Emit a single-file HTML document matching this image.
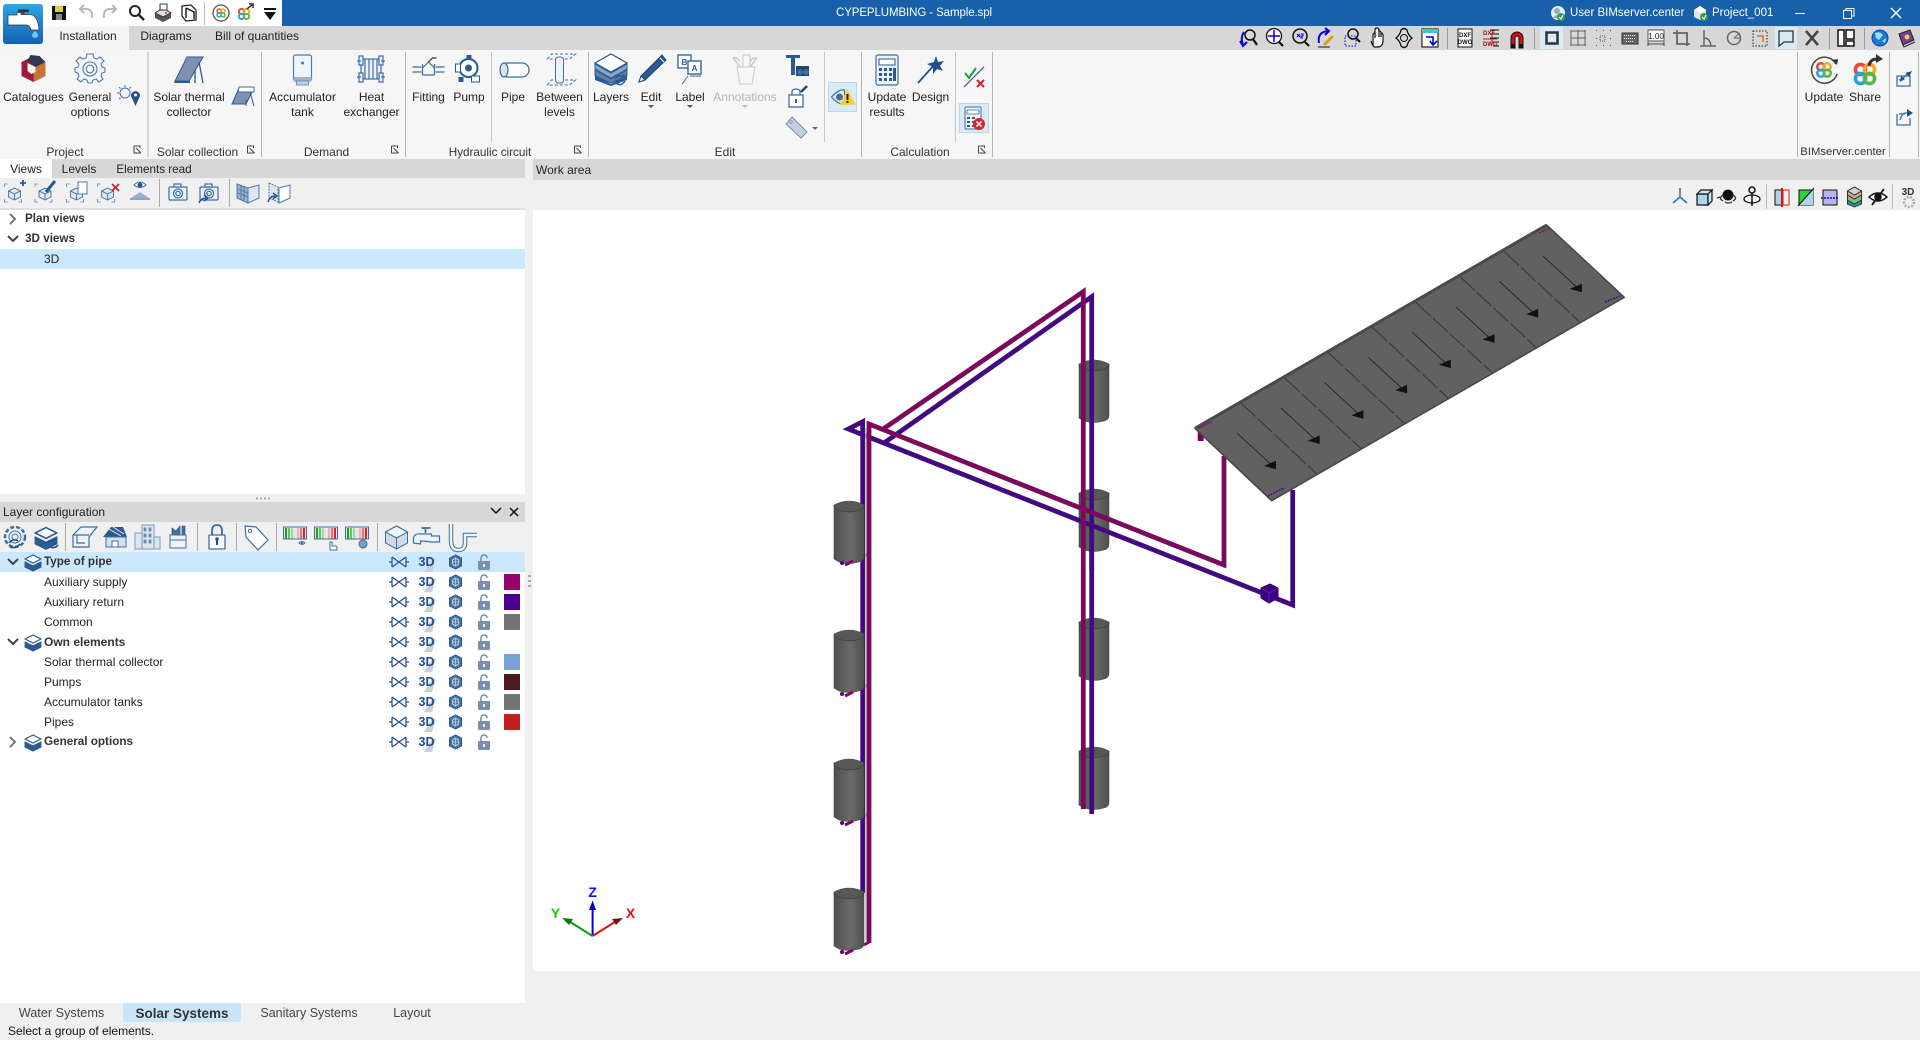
<!DOCTYPE html>
<html><head><meta charset="utf-8"><title>CYPEPLUMBING - Sample.spl</title>
<style>
html,body{margin:0;padding:0;width:1920px;height:1040px;overflow:hidden;background:#f0f0f0}
body{position:relative;font-family:"Liberation Sans",sans-serif;font-size:12px;color:#222}
.b{position:absolute}
.t{position:absolute;white-space:nowrap;line-height:16px}
.c{transform:translateX(-50%);text-align:center;line-height:15px}
.g{color:#333;font-weight:bold}
svg{position:absolute;left:0;top:0}
</style></head><body>
<div class="b" style="left:0;top:0;width:1920px;height:26px;background:#1860a9"></div>
<div class="b" style="left:0;top:0;width:282px;height:26px;background:#fff"></div>
<div class="b" style="left:0;top:26px;width:1920px;height:24px;background:#d7d7d7"></div>
<div class="b" style="left:0;top:26px;width:47px;height:24px;background:#f5f5f5"></div>
<div class="b" style="left:47px;top:26px;width:82px;height:24px;background:#f5f5f5"></div>
<div class="b" style="left:0;top:50px;width:1920px;height:109px;background:#f6f6f6"></div>
<div class="b" style="left:0;top:159px;width:525px;height:19px;background:#d7d7d7"></div>
<div class="b" style="left:0;top:159px;width:52px;height:19px;background:#fff"></div>
<div class="b" style="left:533px;top:159px;width:1387px;height:21px;background:#d7d7d7"></div>
<div class="b" style="left:0;top:208px;width:525px;height:286px;background:#fff;border-top:2px solid #e0e0e0;box-sizing:border-box"></div>
<div class="b" style="left:0;top:249px;width:525px;height:20px;background:#cce8ff"></div>
<div class="b" style="left:0;top:502px;width:525px;height:20px;background:#d7d7d7"></div>
<div class="b" style="left:0;top:552px;width:525px;height:451px;background:#fff"></div>
<div class="b" style="left:0;top:552px;width:525px;height:20px;background:#cce8ff"></div>
<div class="b" style="left:533px;top:210px;width:1387px;height:761px;background:#fff"></div>
<div class="b" style="left:123px;top:1003px;width:118px;height:19px;background:#c9e6f8"></div>
<div class="b" style="left:1775px;top:27px;width:22px;height:22px;background:#d9ebf7"></div>
<div class="b" style="left:1540px;top:27px;width:23px;height:22px;background:#d9ebf7;border:0"></div>
<div class="b" style="left:828px;top:82px;width:29px;height:30px;background:#d9ebf7;border:1px solid #bcd6e8;box-sizing:border-box"></div>
<div class="b" style="left:959px;top:103px;width:30px;height:30px;background:#d9ebf7;border:1px solid #bcd6e8;box-sizing:border-box"></div>

<svg width="1920" height="1040" viewBox="0 0 1920 1040" xmlns="http://www.w3.org/2000/svg">
<defs>
<linearGradient id="lg" x1="0" y1="0" x2="0" y2="1"><stop offset="0" stop-color="#2ea6e6"/><stop offset="1" stop-color="#1462b2"/></linearGradient>
<linearGradient id="tg" x1="0" y1="0" x2="1" y2="0"><stop offset="0" stop-color="#4f4f4f"/><stop offset=".55" stop-color="#6a6a6a"/><stop offset="1" stop-color="#4f4f4f"/></linearGradient>
<symbol id="tank" viewBox="0 0 32 66" overflow="visible">
<path d="M1 6Q16 -2 31 6V57Q31 62 26 63Q16 66 6 63L1 60Z" fill="url(#tg)" stroke="#4a4a4a" stroke-width=".6"/>
<path d="M1 6Q16 -2 31 6Q31 12 16 13Q1 12 1 6Z" fill="#575757"/>
<path d="M1 6Q1 12 16 13Q31 12 31 6" fill="none" stroke="#3c3c3c" stroke-width=".7"/>
</symbol>
<g id="stub"><path d="M845 6L853 2" fill="none" stroke="#8a0062" stroke-width="3"/><path d="M864 -3L869 -6" fill="none" stroke="#8a0062" stroke-width="3"/><circle cx="842" cy="4" r="2" fill="#4b0092"/></g>
<g id="lay" fill="#2c5a90" stroke="#2c5a90" stroke-linejoin="round"><path d="M-8 3L0 7L8 3V5L0 9L-8 5Z"/><path d="M-8 0L0 4L8 0V2L0 6L-8 2Z" /><path d="M-8 -3L0 -7L8 -3L0 1Z" fill="#fff" stroke-width="1.2"/></g>
<g id="rowi">
<g fill="none" stroke="#1f4f8a" stroke-width="1.2"><path d="M392 -5V5M406 -5V5M392 -5L406 5M406 -5L392 5M389 0h3M406 0h3"/></g>
<path d="M432 -3h4l-4 13h-8z" fill="#c9cfd6"/>
<g transform="translate(455.5,0)"><path d="M0 -7L6 -4V4L0 7L-6 4V-4Z" fill="#44719f" stroke="#2c5a90"/><path d="M-3 -2L0 -4L3 -2V2L0 4L-3 2Z" fill="none" stroke="#cfdbe8" stroke-width=".9"/><path d="M0 -4V4M-3 0H3" stroke="#cfdbe8" stroke-width=".7"/></g>
<g transform="translate(484,1)"><path d="M-3 -2V-4Q-3 -8 0 -8Q3 -8 3 -5" fill="none" stroke="#7b90ab" stroke-width="1.6"/><rect x="-6" y="-2" width="12" height="9" rx="1" fill="#7b90ab"/><rect x="-1" y="1" width="2" height="3" fill="#e8edf3"/></g>
</g>
<g id="cam" fill="none" stroke="#3c6ea5" stroke-width="1.2"><rect x="-9" y="-6" width="18" height="13" rx="1" fill="#eef3f8"/><rect x="-4" y="-9" width="7" height="3" fill="#eef3f8"/><circle cy="0.5" r="4.5"/><circle cy=".5" r="2.2"/></g>
<g id="vc" fill="none" stroke="#4f79a8" stroke-width="1"><path d="M-6 -2L0 -5L6 -2V4L0 7L-6 4Z" fill="#e1e8f0"/><path d="M-6 -2L0 1L6 -2M0 1V7"/><path d="M-10 -6V-9H-7M-10 6V9H-7M4 9H7V6" stroke="#7d9cc0"/></g>
<g id="gg"><rect x="-11" y="-6" width="22" height="9" fill="#dfe6ec"/><g fill="#20a020"><rect x="-10" y="-7" width="2" height="11"/><rect x="-7" y="-7" width="2" height="11" fill="#5fc65f"/><rect x="-4" y="-7" width="2" height="11" fill="#a0dca0"/></g><g fill="#e02020"><rect x="8" y="-7" width="2" height="11"/><rect x="5" y="-7" width="2" height="11" fill="#f07070"/><rect x="2" y="-7" width="2" height="11" fill="#f5b0b0"/></g><rect x="-11.500" y="-8" width="23" height="12" fill="none" stroke="#3c6ea5"/></g>
<g id="bimr" fill="none" stroke-width="2.4"><circle cx="-3" cy="-3" r="3.4" stroke="#e8453c"/><circle cx="3" cy="-3" r="3.4" stroke="#f5a623"/><circle cx="-3" cy="3" r="3.4" stroke="#25a0e0"/><circle cx="3" cy="3" r="3.4" stroke="#55b848"/></g>
<path id="pv" d="M862.700 893V421.700L848.300 429L1292.700 605V490" fill="none"/>
<path id="pv2" d="M884 443L1091.700 296.700V814" fill="none"/>
<path id="pm" d="M869 943V424L1224 565V456" fill="none"/>
<path id="pm2" d="M881.700 430L1083.300 291.700V809" fill="none"/>
</defs>

<!-- logo + QAT -->
<rect x="3" y="4" width="40" height="40" rx="3" fill="url(#lg)"/>
<path d="M8 15H17V12.500H21V14.500H31Q38 16 39 30H31Q30 25 26 25H8Z" fill="#fff" stroke="#333" stroke-width=".7"/><rect x="18" y="9.500" width="11" height="2.500" fill="#333"/><rect x="21.500" y="11.500" width="3" height="3" fill="#444"/><path d="M35 30Q40 35 38 37Q35 40 32 37Q30 35 35 30Z" fill="#6fc3f0" stroke="#1e6aa8" stroke-width=".8"/>
<g transform="translate(59,13)"><rect x="-7" y="-7" width="14" height="14" fill="#111"/><rect x="-4" y="-7" width="8" height="6" fill="#d4d433"/><rect x="-3" y="1" width="6" height="6" fill="#888"/></g>
<path d="M92 18Q93 9 86 9H81M84 5L80 9L84 13" fill="none" stroke="#b9b9b9" stroke-width="2"/>
<path d="M104 18Q103 9 110 9H115M112 5L116 9L112 13" fill="none" stroke="#b9b9b9" stroke-width="2"/>
<g fill="none" stroke="#222" stroke-width="2"><circle cx="135" cy="11" r="5"/><path d="M139 15L144 20" stroke-width="2.500"/></g>
<g transform="translate(163,13)"><path d="M-8 0L0 -5L8 0V5L0 9L-8 5Z" fill="#555"/><path d="M-8 0L0 -5L8 0L0 4Z" fill="#ddd" stroke="#333"/><rect x="-3" y="-9" width="7" height="6" fill="#fff" stroke="#333"/><circle cx="3" cy="0" r="1" fill="#d33"/></g>
<g transform="translate(189,13)"><path d="M-7 -7L2 -8L7 -3V7L-3 8L-7 3Z" fill="#fff" stroke="#222" stroke-width="1.300"/><path d="M-3 -5L5 -1V6M-3 -5V5" fill="none" stroke="#222" stroke-width="1.500"/></g>
<rect x="204" y="2" width="1" height="23" fill="#bbb"/>
<g transform="translate(221,13)"><circle r="8" fill="#fff" stroke="#555" stroke-width="1.300"/><use href="#bimr" transform="scale(.62)"/></g>
<g transform="translate(244,14)"><use href="#bimr" transform="scale(.8)"/><path d="M3 -5L8 -9M5 -10H9V-6" fill="none" stroke="#333" stroke-width="1.500"/></g>
<path d="M264 8H276V10H264ZM264 12H276L270 20Z" fill="#111"/>

<!-- title bar right -->
<g transform="translate(1558,13)"><circle r="7" fill="#e6edf5"/><circle cx="-1" cy="-2" r="3" fill="#9ab"/><path d="M-5 5Q-1 -1 3 5Z" fill="#9ab"/><circle cx="3" cy="4" r="4" fill="#3a9a4a"/><path d="M1 4L3 6L5 2" stroke="#fff" fill="none"/></g>
<g transform="translate(1700,13)"><path d="M-6 -3L0 -7L6 -3V4L0 7L-6 4Z" fill="#dfe5ea"/><path d="M-6 -3L0 0L6 -3L0 -7Z" fill="#fff"/><circle cx="4" cy="4" r="4" fill="#3a9a4a"/><path d="M2 4L4 6L6 2" stroke="#fff" fill="none"/></g>
<g stroke="#fff" fill="none" stroke-width="1"><path d="M1795 13.500H1805"/><rect x="1843.500" y="10.500" width="8" height="8"/><path d="M1846 10.500V8.500H1854V16H1852"/><path d="M1891 8L1901 18M1901 8L1891 18" stroke-width="1.300"/></g>

<!-- top right toolbar -->
<g fill="none" stroke="#111" stroke-width="1.500">
<g transform="translate(1248,38)"><circle cx="2" cy="-3" r="5" /><path d="M5 1L9 7" stroke-width="2.200"/><path d="M-4 -6Q-8 0 -5 6M-8 3L-5 8L-1 4" stroke="#0000e0" stroke-width="2"/></g>
<g transform="translate(1274,38)"><circle r="7.500" cy="-2" fill="#fff" stroke-width="1.300"/><path d="M0 -8V4M-6 -2H6" stroke="#0000e0" stroke-width="1.500"/><path d="M5 4L9 8" stroke-width="2.200"/></g>
<g transform="translate(1300,38)"><circle r="7" cy="-2"/><path d="M5 4L9 8" stroke-width="2.200"/><path d="M-3 -1L0 -4M-3 -4L0 -1" stroke="#0000e0" stroke-width="1"/><path d="M1 -4H3V-2H1V0H3" stroke="#0000e0" stroke-width="1"/></g>
<g transform="translate(1326,38)"><path d="M-7 5Q-9 -6 2 -7M-1 -10L3 -7L-1 -3" stroke="#0000e0" stroke-width="2"/><path d="M-2 7L7 -2" stroke="#d8a020" stroke-width="3"/><path d="M-8 9H4" stroke-width="1"/></g>
<g transform="translate(1352,38)"><rect x="-7" y="-2" width="11" height="10" stroke="#0000e0" stroke-width="1" stroke-dasharray="1.500 1.500"/><circle cx="1" cy="-4" r="5"/><path d="M4 0L8 4" stroke-width="2.200"/></g>
<g transform="translate(1378,38)"><path d="M-5 8V-3Q-5 -5 -3 -5V0M-3 -5V-8Q-3 -10 -1 -10Q1 -10 1 -8V-1M1 -7Q3 -7 3 -5V-1M3 -5Q5 -5 5 -3V4Q4 9 0 9H-3Q-5 9 -7 3" fill="#fff" stroke-width="1.200"/></g>
<g transform="translate(1404,38)"><path d="M-8 0Q-4 -3 -3 -8Q0 -11 3 -8Q4 -3 8 0Q4 3 3 8Q0 11 -3 8Q-4 3 -8 0Z" stroke-width="1.300"/><circle r="3.500" stroke-width="1"/></g>
<g transform="translate(1430,38)"><rect x="-8" y="-9" width="16" height="18" fill="#fff" stroke-width="1.100"/><rect x="-8" y="-9" width="16" height="4" fill="#3cc8d8" stroke="none"/><path d="M-4 -1H3V6M0 3L3 7L7 3" stroke="#0000e0" stroke-width="1.600"/></g>
</g>
<rect x="1447" y="28" width="1" height="21" fill="#999"/>
<g transform="translate(1465,38)"><rect x="-7" y="-9" width="14" height="18" fill="#fff" stroke="#111"/><text x="0" y="-1" font-size="6" font-weight="bold" text-anchor="middle" font-family="Liberation Sans" fill="#111">DXF</text><text x="0" y="6" font-size="6" font-weight="bold" text-anchor="middle" font-family="Liberation Sans" fill="#111">DWG</text></g>
<g transform="translate(1491,38)" stroke="#111" fill="none"><path d="M-1 -8H8M-1 -4H8M-1 0H8M2 4H8M2 8H8" /><text x="-8" y="-3" font-size="6" font-weight="bold" font-family="Liberation Sans" fill="#a01010" stroke="none">DXF</text><text x="-8" y="8" font-size="6" font-weight="bold" font-family="Liberation Sans" fill="#a01010" stroke="none">DWG</text><path d="M-8 1H6M1 -3V7" stroke="#d01010"/></g>
<path d="M1511 48V38A6 6 0 0 1 1523 38V48H1519V38A2 2 0 0 0 1515 38V48Z" fill="#d01010" stroke="#111"/><rect x="1511" y="44" width="4" height="4" fill="#111"/><rect x="1519" y="44" width="4" height="4" fill="#111"/>
<rect x="1534" y="28" width="1" height="21" fill="#999"/>
<rect x="1546.500" y="32.500" width="11" height="11" fill="none" stroke="#333" stroke-width="2.500"/>
<g stroke="#666" fill="none"><path d="M1571 30V46M1578 30V46M1585 30V46M1571 31H1586M1571 38H1586M1571 45H1586" /></g>
<g fill="#555"><rect x="1600" y="36" width="5" height="5" fill="none" stroke="#555" stroke-dasharray="1 1"/><path d="M1596 30h1v1h-1zM1603 30h1v1h-1zM1610 30h1v1h-1zM1596 45h1v1h-1zM1603 45h1v1h-1zM1610 45h1v1h-1zM1596 38h1v1h-1zM1610 38h1v1h-1z"/></g>
<g><rect x="1622" y="33" width="16" height="11" fill="#666" stroke="#333"/><path d="M1624 35.500H1636M1624 38.500H1636M1626 41.500H1634" stroke="#eee" stroke-dasharray="1 1"/></g>
<g><rect x="1648" y="30" width="16" height="11" fill="#fff" stroke="#555"/><text x="1656" y="39" font-size="8" text-anchor="middle" font-family="Liberation Sans" fill="#222">1.00</text><path d="M1648 44H1664M1648 42V46M1664 42V46" stroke="#444" fill="none"/></g>
<path d="M1673 33H1687V46M1677 30V44H1690" fill="none" stroke="#666" stroke-width="1.800"/>
<path d="M1700 46H1716M1704 30V46M1704 38Q1710 38 1711 46" fill="none" stroke="#666" stroke-width="1.500"/>
<circle cx="1734" cy="38" r="6.500" fill="none" stroke="#666" stroke-width="1.500"/><path d="M1734 38L1740 33M1734 38H1741" stroke="#666"/>
<rect x="1753" y="31" width="14" height="15" fill="none" stroke="#222" stroke-dasharray="1.500 1.500"/><path d="M1757 36H1763V42" stroke="#d0703a" fill="none" stroke-width="1.500"/>
<path d="M1779 31H1793V42H1784L1779 46Z" fill="none" stroke="#333" stroke-width="1.300"/>
<path d="M1806 31L1818 45M1818 31L1806 45" stroke="#444" stroke-width="2.500"/>
<rect x="1829" y="28" width="1" height="21" fill="#999"/>
<g fill="#fff" stroke="#111" stroke-width="1.500"><rect x="1838" y="30" width="6" height="16"/><rect x="1846" y="30" width="8" height="9"/><rect x="1846" y="41" width="8" height="5"/></g>
<rect x="1864" y="28" width="1" height="21" fill="#999"/>
<circle cx="1880" cy="38" r="8" fill="#1e78d8" stroke="#0b4a9a"/><path d="M1875 33Q1880 31 1883 35L1879 40L1876 38ZM1882 41L1886 38L1885 43Z" fill="#9fdfff"/>
<path d="M1899 34L1910 30L1914 40L1903 45Z" fill="#7a3aa0" stroke="#222"/><path d="M1899 34L1903 45L1904 47L1915 42" fill="none" stroke="#222"/>
<circle cx="1907" cy="37" r="2.500" fill="#e8d830"/>

<!-- ribbon separators -->
<g fill="#b4b4b4"><rect x="147.500" y="52" width="1" height="105"/><rect x="261" y="52" width="1" height="105"/><rect x="405" y="52" width="1" height="105"/><rect x="491" y="52" width="1" height="90" fill="#c8c8c8"/><rect x="588" y="52" width="1" height="105"/><rect x="824" y="52" width="1" height="90" fill="#c8c8c8"/><rect x="861" y="52" width="1" height="105"/><rect x="955" y="52" width="1" height="90" fill="#c8c8c8"/><rect x="992" y="52" width="1" height="105"/><rect x="1797" y="52" width="1" height="105"/><rect x="1889" y="52" width="1" height="105"/><rect x="1918" y="52" width="1" height="105"/></g>
<g id="launch" fill="none" stroke="#444"><path d="M134 146V153H141M134 146H140V148M136 148L141 153" /></g>
<use href="#launch" x="113.500"/><use href="#launch" x="257.500"/><use href="#launch" x="440.500"/><use href="#launch" x="844.500"/>

<!-- ribbon icons -->
<g transform="translate(33.500,69)"><path d="M0 -13L12 -7L12 7L0 13L-12 7L-12 -7Z" fill="#9c1a3a"/><path d="M-3 -14L6 -13L12 -7L2 -2L-6 -8Z" fill="#2d3a52"/><path d="M2 -2L12 -7V7L0 13V3Z" fill="#c8733c"/><path d="M-6 -6L2 -2V3L-2 5L-6 2Z" fill="#f4f4f4"/></g>
<g transform="translate(90,69)" fill="none" stroke="#4f79a8" stroke-width="1.100"><path d="M-3 -14H3L4 -10L7 -9L10 -11L14 -7L11 -4L12 -1L15 0V4L12 5L11 8L13 11L9 14L6 11L3 12L2 15H-2L-3 12L-6 11L-9 14L-13 11L-11 8L-12 5L-15 4V0L-12 -1L-11 -4L-14 -7L-10 -11L-7 -9L-4 -10Z" fill="#f4f6f9" transform="translate(0,-1)"/><circle r="7"/><circle r="3.800"/></g>
<g transform="translate(128,97)"><circle cx="-3" cy="-4" r="5" fill="none" stroke="#3f6ea3"/><path d="M-3 -12V-10M-11 -4H-9M-9 -10L-7.500 -8.500M3 -10L1.500 -8.500M-9 2L-7.500 .5" stroke="#3f6ea3"/><path d="M5 -5A4.500 4.500 0 0 1 12 -1L7.500 9L3 -1A4.500 4.500 0 0 1 5 -5Z" fill="#274f85"/><circle cx="7.500" cy="-2" r="1.500" fill="#fff"/></g>
<path d="M187 57H203L189 81H175Z" fill="#7f90b0" stroke="#2b5a90"/><path d="M174 83H190V81H175Z" fill="#2b5a90"/><path d="M199 62L203 83M195 70V83" stroke="#2b5a90" fill="none" stroke-width="1.300"/>
<path d="M239 88H254L246 104H232Z" fill="#7f90b0" stroke="#2b5a90"/><path d="M239 87H254V92H238Z" fill="#fff" stroke="#3f6ea3"/><path d="M250 92L254 106M246 100V106" stroke="#2b5a90" fill="none"/>
<g transform="translate(302.500,70)"><rect x="-9" y="-15" width="18" height="26" rx="2" fill="#f0f4f8" stroke="#4f79a8" stroke-width="1.200"/><rect x="-9" y="7" width="18" height="4" fill="#9bb4d0"/><rect x="-6" y="11" width="12" height="4" fill="#c2d0e0" stroke="#4f79a8" stroke-width=".7"/><circle cy="-7" r="1.500" fill="#4f79a8"/></g>
<g transform="translate(371,69)" fill="#eef3f8" stroke="#3f6ea3" stroke-width="1.200"><rect x="-10" y="-10" width="20" height="20"/><path d="M-14 -8H-10M-14 8H-10M10 -8H14M10 8H14M-6 -10V10M-2 -10V10M2 -10V10M6 -10V10M-12 -13V-4H-8V-13ZM-12 4V13H-8V4ZM8 -13V-4H12V-13ZM8 4V13H12V4Z"/></g>
<g transform="translate(428.500,69)" fill="none" stroke="#3f6ea3" stroke-width="1.200"><path d="M-16 -2H-7M7 -2H16M-16 3H-7M7 3H16M-6 -5V6M6 -5V6M-6 -1L0 -7L6 -1M-6 6H6"/><path d="M0 -7L4 -11H8" stroke="#333"/></g>
<g transform="translate(468.500,69)"><rect x="-2" y="-14" width="5" height="5" fill="#2b5a90"/><circle cy="-1" r="9" fill="#fff" stroke="#2b5a90" stroke-width="2"/><circle cy="-1" r="3.500" fill="#2b5a90"/><rect x="-13" y="-5" width="5" height="8" fill="#fff" stroke="#2b5a90"/><rect x="-10" y="8" width="5" height="5" fill="#2b5a90"/><rect x="3" y="7" width="8" height="6" fill="#fff" stroke="#2b5a90"/></g>
<g transform="translate(514,70)" fill="#fff" stroke="#3f6ea3" stroke-width="1.300"><rect x="-13" y="-7" width="28" height="14" rx="7"/><ellipse cx="-10" rx="4" ry="7" fill="#dbe5f0"/></g>
<g transform="translate(559.500,70)" fill="none" stroke="#3f6ea3"><path d="M-12 -11L-8 -16H16L10 -11ZM-12 15L-8 10H16L10 15Z" stroke-dasharray="3 2"/><rect x="-4" y="-13" width="8" height="26" rx="3" fill="#eef3f8"/></g>
<g transform="translate(611,70)"><path d="M-16 5L0 14L16 5V10L0 16L-16 10Z" fill="#2c5a90"/><path d="M-16 0L0 9L16 0V6L0 13L-16 6Z" fill="#5f7fa8" stroke="#2c5a90"/><path d="M-16 -6L0 3L16 -6V-1L0 8L-16 -1Z" fill="#8ca4c2" stroke="#2c5a90"/><path d="M-16 -7L0 -16L16 -7L0 2Z" fill="#fff" stroke="#2c5a90" stroke-width="1.200"/><path d="M4 9Q9 3 13 8M13 4V9H8M5 13Q10 17 14 11" fill="none" stroke="#2c5a90" stroke-width="1.500"/></g>
<g transform="translate(652,69)"><path d="M10 -14L14 -9L-7 11L-13 13L-11 7Z" fill="#2b5a90" stroke="#1f4570"/><path d="M8 -11L12 -7" stroke="#fff"/><path d="M-13 13L-11 7L-7 11Z" fill="#fff" stroke="#1f4570"/></g>
<g transform="translate(690,70)"><rect x="-12" y="-15" width="13" height="13" fill="#fff" stroke="#2b5a90" stroke-width="1.300"/><rect x="-2" y="-9" width="13" height="13" fill="#fff" stroke="#2b5a90" stroke-width="1.300"/><text x="-5.500" y="-5" font-size="8" font-weight="bold" text-anchor="middle" font-family="Liberation Sans" fill="#2b5a90">B</text><text x="4.500" y="1" font-size="8" font-weight="bold" text-anchor="middle" font-family="Liberation Sans" fill="#2b5a90">A</text><path d="M-2 6L-8 14M0 6H11" stroke="#3f6ea3" fill="none"/></g>
<g transform="translate(745,70)" fill="#f8f8f8" stroke="#c9c9c9"><path d="M-8 -3H10L7 14H-5Z"/><rect x="-2" y="-15" width="7" height="12"/><path d="M-12 -12L-5 -3M12 -12L5 -3M-12 -12Q-7 -13 -5 -8M12 -12Q7 -13 5 -8" fill="none" stroke-width="1.500"/></g>
<g transform="translate(797,66)"><path d="M-11 -11H3V-8H-2V9H-6V-8H-11Z" fill="#2b5a90"/><path d="M-1 0H12V10H-1Z" fill="#1f4570"/><circle cx="3" cy="6" r="3" fill="#3f6ea3"/><circle cx="9" cy="6" r="3" fill="#3f6ea3"/></g>
<g transform="translate(798,97)"><rect x="-9" y="-2" width="14" height="12" fill="#fff" stroke="#3f6ea3" stroke-width="1.300"/><path d="M-6 -2V-5Q-6 -8 -2 -8Q2 -8 2 -5V-2" fill="none" stroke="#3f6ea3" stroke-width="1.300"/><rect x="-3" y="2" width="2" height="4" fill="#2b5a90"/><path d="M3 -5L9 -11" stroke="#1f4570" stroke-width="2.500"/></g>
<path d="M786 124L792 117L807 132L801 138Z" fill="#c5cede" stroke="#7d92ad"/><circle cx="791" cy="122" r="1.200" fill="#fff" stroke="#7d92ad"/><path d="M812 127H818L815 130Z" fill="#666"/>
<path d="M648 105H654L651 108ZM687 105H693L690 108Z" fill="#555"/><path d="M742 105H748L745 108Z" fill="#bbb"/>
<g transform="translate(842.500,97)"><path d="M-11 0Q-4 -8 2 -7L2 7Q-4 8 -11 0Z" fill="none" stroke="#3f6ea3" stroke-width="1.200"/><circle cx="-3" r="3.500" fill="#3f6ea3"/><path d="M5 -8L13 8H-3Z" fill="#f4d03f"/><rect x="4" y="-3" width="2" height="6" fill="#222"/><rect x="4" y="4" width="2" height="2" fill="#222"/></g>
<g transform="translate(887,70)"><rect x="-11" y="-15" width="22" height="30" rx="2" fill="#eef3f8" stroke="#3f6ea3" stroke-width="1.200"/><rect x="-8" y="-11" width="16" height="6" fill="#fff" stroke="#2b5a90"/><path d="M-8 -2h3v3h-3zM-3 -2h3v3h-3zM2 -2h3v3h-3zM-8 3h3v3h-3zM-3 3h3v3h-3zM2 3h3v3h-3zM-8 8h3v3h-3zM-3 8h3v3h-3zM2 8h3v3h-3zM6 -2h3v13h-3z" fill="#2b5a90"/></g>
<g transform="translate(931,70)"><path d="M-13 13L4 -6" stroke="#1f4f8a" stroke-width="1.800"/><path d="M5 -14L7 -8L13 -9L9 -4L12 1L6 -1L2 4L2 -3L-4 -6L3 -8Z" fill="#1f4f8a"/></g>
<path d="M965 73L969 78L976 68" fill="none" stroke="#12a050" stroke-width="2"/><path d="M964 87L984 67" stroke="#2b5a90" stroke-width="1.200"/><path d="M977 80L984 87M984 80L977 87" stroke="#d81e2c" stroke-width="2"/>
<g transform="translate(973,118)"><rect x="-8" y="-11" width="16" height="22" rx="1" fill="#eef3f8" stroke="#3f6ea3"/><rect x="-6" y="-8" width="12" height="4" fill="#fff" stroke="#2b5a90" stroke-width=".7"/><path d="M-6 -1h3v2h-3zM-1 -1h3v2h-3zM-6 3h3v2h-3zM-1 3h3v2h-3zM-6 7h3v2h-3zM-1 7h3v2h-3z" fill="#2b5a90"/><circle cx="6" cy="6" r="6" fill="#d8222e"/><path d="M3.500 3.500L8.500 8.500M8.500 3.500L3.500 8.500" stroke="#fff" stroke-width="1.500"/></g>
<g transform="translate(1824,70)"><path d="M12 -6A13 13 0 1 0 13 4" fill="none" stroke="#444" stroke-width="1.500"/><path d="M8 -10L14 -11L13 -5Z" fill="#333"/><use href="#bimr" transform="scale(1.050)"/></g>
<g transform="translate(1865,74)"><use href="#bimr" transform="scale(1.500)"/><path d="M4 -8Q5 -15 12 -15" fill="none" stroke="#333" stroke-width="3"/><path d="M11 -20L18 -15L11 -11Z" fill="#333"/></g>
<g fill="none" stroke="#3f6ea3" stroke-width="1.300"><path d="M1897 76H1910V86H1897ZM1899 80Q1904 79 1908 72"/><path d="M1899 114H1905M1897 114V125H1910V118M1900 120Q1902 112 1908 113"/></g>
<path d="M1905 79L1901 76L1900 82ZM1906 73L1912 71L1909 77Z" fill="#1f4f8a"/><path d="M1907 109L1913 113L1907 117Z" fill="#1f4f8a"/>

<!-- views toolbar -->
<g>
<use href="#vc" x="14.500" y="193"/><path d="M20 183H26M23 180V186" stroke="#2b5a90" stroke-width="1.800"/>
<use href="#vc" x="45" y="193"/><path d="M46 192L55 181" stroke="#2b5a90" stroke-width="3"/>
<use href="#vc" x="76.500" y="193"/><rect x="78" y="182" width="9" height="12" fill="#fff" stroke="#4f79a8"/>
<use href="#vc" x="107.600" y="193"/><path d="M112 184L119 191M119 184L112 191" stroke="#d81e2c" stroke-width="1.800"/>
<g transform="translate(140,193)"><path d="M-6 -8Q0 -14 6 -8Q0 -3 -6 -8Z" fill="#fff" stroke="#3f6ea3"/><circle cy="-8" r="2.500" fill="#2b5a90"/><path d="M-9 5L0 -1L9 5Z" fill="#9db3cd"/><path d="M-10 6H10" stroke="#2b5a90"/></g>
<rect x="159" y="179" width="1" height="28" fill="#aaa"/>
<use href="#cam" x="178" y="193"/><use href="#cam" x="209" y="193"/><path d="M199 203Q201 198 206 198M204 195L208 198L204 201" fill="none" stroke="#1f4f8a" stroke-width="1.500"/>
<rect x="229" y="179" width="1" height="28" fill="#aaa"/>
<g transform="translate(248,193)" stroke="#4f79a8" fill="#dfe6ee"><path d="M-11 -9L0 -5V10L-11 5Z" fill="#9db3cd"/><path d="M0 -5L11 -8V5L0 10Z"/><path d="M-7 -8V7M-4 -7V8M-10 -4L0 0M-10 0L0 4" /></g>
<g transform="translate(279,193)" stroke="#4f79a8" fill="#fff"><path d="M-10 -10L-1 -6V9L-10 5Z" fill="#dfe6ee" stroke-dasharray="2 1"/><path d="M0 -5L11 -8V5L0 10Z"/><path d="M-11 9Q-9 3 -4 3M-6 0L-2 3L-6 6" fill="none" stroke="#1f4f8a" stroke-width="1.500"/></g>
</g>
<!-- tree chevrons -->
<g fill="none" stroke-width="2"><path d="M10 214L15 219L10 224" stroke="#777"/><path d="M8 236L13 241L18 236" stroke="#444"/>
<path d="M8 559L13 564L18 559" stroke="#444"/><path d="M8 639L13 644L18 639" stroke="#444"/><path d="M10 737L15 742L10 747" stroke="#777"/></g>
<use href="#lay" x="33" y="562"/><use href="#lay" x="33" y="642"/><use href="#lay" x="33" y="742"/>

<!-- splitter -->
<path d="M256 497.500h2v2h-2zM260 497.500h2v2h-2zM264 497.500h2v2h-2zM268 497.500h2v2h-2z" fill="#aaa"/>
<path d="M528 575h3v2h-3zM528 580h3v2h-3zM528 585h3v2h-3z" fill="#aaa"/>
<!-- header x -->
<path d="M491 508L496 513L501 508M510 508L518 516M518 508L510 516" fill="none" stroke="#111" stroke-width="1.500"/>

<!-- layer toolbar -->
<g>
<g transform="translate(15,537)" fill="none" stroke="#3f6ea3"><circle r="10" stroke-dasharray="4 2" stroke-width="2.500"/><circle r="6" fill="#eef3f8"/><circle r="3"/></g>
<path d="M9 543Q13 538 18 541M10 547Q16 549 20 544" stroke="#1f4f8a" fill="none" stroke-width="1.500"/>
<use href="#lay" transform="translate(46,537) scale(1.350)"/><path d="M48 542Q52 538 57 541M50 547Q55 549 58 545" stroke="#1f4f8a" fill="none" stroke-width="1.500"/>
<g transform="translate(85,537)" fill="#eef3f8" stroke="#3f6ea3" stroke-width="1.200"><path d="M-12 -2L-4 -10H12L4 0V10H-12Z" /><path d="M-12 -2H4M-8 -2V6H0" fill="none"/></g>
<g transform="translate(115,537)"><path d="M-12 0L-4 -10H8L12 0Z" fill="#2c5a90"/><path d="M-6 -8L6 -1M-2 -10L9 -3" stroke="#eee"/><rect x="-9" y="0" width="20" height="10" fill="#d7e0ea" stroke="#3f6ea3"/><rect x="-3" y="4" width="6" height="6" fill="#fff" stroke="#3f6ea3"/></g>
<g transform="translate(147,537)" fill="#dde5ee" stroke="#7d9cc0"><rect x="-5" y="-12" width="12" height="24"/><rect x="-12" y="-4" width="7" height="16"/><rect x="7" y="0" width="6" height="12"/><path d="M-3 -9h2v3h-2zM2 -9h2v3h-2zM-3 -3h2v3h-2zM2 -3h2v3h-2zM-3 3h2v3h-2zM2 3h2v3h-2z" fill="#3f6ea3"/></g>
<g transform="translate(178,537)"><rect x="-8" y="-2" width="16" height="13" fill="#eef3f8" stroke="#3f6ea3"/><path d="M-6 -2V-9L-2 -6L2 -11V-2M4 -2V-11H7V-2" fill="#3f6ea3" stroke="#1f4f8a" stroke-width=".6"/><path d="M-8 3H8" stroke="#3f6ea3"/></g>
<g transform="translate(217,537)"><path d="M-5 -2V-6Q-5 -12 0 -12Q5 -12 5 -6V-2" fill="none" stroke="#3f6ea3" stroke-width="1.800"/><rect x="-8" y="-2" width="16" height="14" rx="1" fill="#fff" stroke="#3f6ea3" stroke-width="1.300"/><rect x="-1" y="2" width="2" height="6" fill="#1f4f8a"/><circle cy="2" r="1.800" fill="#1f4f8a"/></g>
<g transform="translate(256,537)"><path d="M-11 -11L0 -10L12 3L2 13L-10 0Z" fill="#fff" stroke="#3f6ea3" stroke-width="1.200"/><circle cx="-6" cy="-6" r="1.700" fill="none" stroke="#3f6ea3"/></g>
<use href="#gg" x="295" y="535"/><use href="#gg" x="326" y="535"/><use href="#gg" x="357" y="535"/>
<path d="M299 543Q302 540 305 543Q302 546 299 543Z" fill="#fff" stroke="#3f6ea3"/><circle cx="302" cy="543" r="1" fill="#1f4f8a"/>
<path d="M330 549V542h2v4h3q2 0 2 2v2h-7z" fill="#fff" stroke="#3f6ea3"/><circle cx="363" cy="544" r="4" fill="#7d9cc0" stroke="#3f6ea3"/>
<g transform="translate(396.500,537)" stroke="#3f6ea3"><path d="M-11 -5L0 -11L11 -5V6L0 12L-11 6Z" fill="#d2dae5"/><path d="M-11 -5L0 1L11 -5L0 -11Z" fill="#f0f3f7"/><path d="M0 1V12" fill="none"/></g>
<g transform="translate(427.500,537)" fill="#eef3f8" stroke="#3f6ea3" stroke-width="1.200"><path d="M-14 6V0Q-12 -4 -6 -3H4V-1H12V5H4Q-2 4 -7 4V7Z"/><path d="M-2 -4V-8M-6 -9H3" fill="none" stroke-width="1.800"/></g>
<path d="M451 524V540Q451 550 458 550Q465 550 465 543V535H477" fill="none" stroke="#3f6ea3" stroke-width="4.500"/><path d="M451 524V540Q451 550 458 550Q465 550 465 543V535H477" fill="none" stroke="#eef3f8" stroke-width="2.500"/>
<g fill="#aaa"><rect x="65" y="523" width="1" height="28"/><rect x="197" y="523" width="1" height="28"/><rect x="236" y="523" width="1" height="28"/><rect x="276" y="523" width="1" height="28"/><rect x="377" y="523" width="1" height="28"/></g>
</g>

<!-- layer rows -->
<use href="#rowi" y="562"/><use href="#rowi" y="582"/><use href="#rowi" y="602"/><use href="#rowi" y="622"/><use href="#rowi" y="642"/><use href="#rowi" y="662"/><use href="#rowi" y="682"/><use href="#rowi" y="702"/><use href="#rowi" y="722"/><use href="#rowi" y="742"/>
<g font-family="Liberation Sans" font-size="12.500" font-weight="bold" fill="#1f4f8a" text-anchor="middle">
<text x="426.500" y="566">3D</text><text x="426.500" y="586">3D</text><text x="426.500" y="606">3D</text><text x="426.500" y="626">3D</text><text x="426.500" y="646">3D</text><text x="426.500" y="666">3D</text><text x="426.500" y="686">3D</text><text x="426.500" y="706">3D</text><text x="426.500" y="726">3D</text><text x="426.500" y="746">3D</text>
</g>
<g><rect x="504" y="574" width="16" height="16" fill="#99006b"/><rect x="504" y="594" width="16" height="16" fill="#4b0095"/><rect x="504" y="614" width="16" height="16" fill="#737373"/><rect x="504" y="654" width="16" height="16" fill="#7aa1d3"/><rect x="504" y="674" width="16" height="16" fill="#4a1c1e"/><rect x="504" y="694" width="16" height="16" fill="#737373"/><rect x="504" y="714" width="16" height="16" fill="#c41e1e"/></g>

<!-- view toolbar right -->
<g>
<path d="M1680 188V197L1673 203M1680 197L1687 203" fill="none" stroke="#3b6e8e" stroke-width="1.500"/>
<g transform="translate(1704,197)" stroke="#111" stroke-width="1.200"><path d="M-7 -3H4V8H-7Z" fill="#a9d4ea"/><path d="M-7 -3L-3 -7H8L4 -3ZM4 -3L8 -7V4L4 8Z" fill="#cfe8f5"/></g>
<g transform="translate(1728,197)"><circle r="5.500" cy="-2" fill="#111"/><path d="M-5 -2Q-10 1 -5 4M5 -2Q10 1 5 4M-3 5Q0 7 4 5" fill="none" stroke="#333" stroke-width="1.300"/><path d="M-8 0L-11 1" stroke="#111"/></g>
<g transform="translate(1752,197)"><circle cy="-7" r="3" fill="none" stroke="#111" stroke-width="1.500"/><path d="M0 -4V9" stroke="#111" stroke-width="1.500"/><ellipse cy="2" rx="8" ry="4" fill="none" stroke="#111" stroke-width="1.300"/></g>
<rect x="1766" y="184" width="1" height="25" fill="#bbb"/>
<g transform="translate(1782,197)"><rect x="-7" y="-7" width="14" height="15" fill="#a9d4ea" stroke="#111"/><path d="M0 -9V10" stroke="#e01010" stroke-width="2"/><rect x="1" y="-7" width="6" height="15" fill="#f4f4f4" stroke="#e01010"/></g>
<g transform="translate(1806,197)"><rect x="-7" y="-7" width="14" height="15" fill="#2fd13a" stroke="#111"/><path d="M-7 8L7 -7V8Z" fill="#a9d4ea"/><path d="M-8 9L8 -9" stroke="#111"/></g>
<g transform="translate(1830,197)"><rect x="-7" y="-7" width="14" height="15" fill="#b6b6e8" stroke="#111"/><path d="M-9 1H9" stroke="#1010c0" stroke-dasharray="2 1" stroke-width="1.500"/></g>
<g transform="translate(1854.500,197)" stroke="#333"><path d="M-7 3L0 7L7 3V7L0 10L-7 7Z" fill="#2a9a9a"/><path d="M-7 -2L0 2L7 -2V3L0 7L-7 3Z" fill="#7ac080"/><path d="M-7 -6L0 -2L7 -6V-2L0 2L-7 -2Z" fill="#e0a878"/><path d="M-7 -6L0 -10L7 -6L0 -2Z" fill="#c8d4e0"/></g>
<g transform="translate(1878,197)"><path d="M-9 0Q0 -8 9 0Q0 8 -9 0Z" fill="#fff" stroke="#111" stroke-width="1.500"/><circle r="3.800" fill="#111"/><path d="M-6 8L6 -8" stroke="#111" stroke-width="1.800"/></g>
<rect x="1892" y="184" width="1" height="25" fill="#bbb"/>
<text x="1908" y="195" text-anchor="middle" font-size="10" font-weight="bold" font-family="Liberation Sans" fill="#333">3D</text><circle cx="1909" cy="202" r="5" fill="none" stroke="#aaa" stroke-width="2.500" stroke-dasharray="2 1.500"/>
</g>

<!-- 3D view -->
<use href="#tank" x="1078" y="358" width="32" height="66"/>
<use href="#tank" x="1078" y="487" width="32" height="66"/>
<use href="#tank" x="1078" y="616" width="32" height="66"/>
<use href="#tank" x="1078" y="745" width="32" height="66"/>
<use href="#pv" stroke="#33245a" stroke-width="4.800"/><use href="#pv2" stroke="#33245a" stroke-width="4.800"/>
<use href="#pv" stroke="#4b0092" stroke-width="3"/><use href="#pv2" stroke="#4b0092" stroke-width="3"/>
<use href="#tank" x="833" y="499" width="32" height="66"/>
<use href="#tank" x="833" y="628" width="32" height="66"/>
<use href="#tank" x="833" y="757" width="32" height="66"/>
<use href="#tank" x="833" y="886" width="32" height="66"/>
<use href="#stub" y="559"/><use href="#stub" y="690"/><use href="#stub" y="819"/><use href="#stub" y="948"/>
<path d="M865.800 428V940" stroke="#c4c4c4" stroke-width="1.200"/>
<use href="#pm" stroke="#5a1f52" stroke-width="4.800"/><use href="#pm2" stroke="#5a1f52" stroke-width="4.800"/>
<use href="#pm" stroke="#8a0062" stroke-width="3"/><use href="#pm2" stroke="#8a0062" stroke-width="3"/>
<path d="M1091.700 520V570" stroke="#33245a" stroke-width="4.800"/><path d="M1091.700 518V572" stroke="#4b0092" stroke-width="3"/>
<path d="M1270 584L1278 588V598L1269 603L1261 598V588Z" fill="#3f0088" stroke="#2e0066"/><path d="M1261 588L1269 593L1278 588M1269 593V603" fill="none" stroke="#6030a0" stroke-width=".7"/>
<path d="M1200.700 428V441" stroke="#860062" stroke-width="6"/>
<path d="M1195 428.300L1546.700 225L1624.300 297.300L1271.700 500.700Z" fill="#616161" stroke="#474747" stroke-width="1.500" stroke-linejoin="round"/>
<path d="M1195 428.300L1546.700 225" stroke="#4a4a4a" stroke-width="3"/>
<g stroke="#3c3c3c" stroke-width="1.300" stroke-dasharray="20 3" fill="none">
<path d="M1240.700 402.700L1316.700 474"/><path d="M1285 378.300L1360.700 448.300"/><path d="M1328.300 352.700L1404.300 423.300"/><path d="M1372.300 327.300L1448.300 398.300"/><path d="M1416 302.700L1492.300 372.700"/><path d="M1460 276.700L1536 347.300"/><path d="M1504.300 251.700L1579.300 321.700"/>
</g>
<g id="arrows" fill="#111" stroke="#222">
<path d="M1237.300 433.300L1276 469" fill="none" stroke-width=".9"/><path d="M1264 466L1276 460.700V469.300Z" stroke="none"/>
<path d="M1281 408L1319.700 443.700" fill="none" stroke-width=".9"/><path d="M1307.700 440.700L1319.700 435.400V444Z" stroke="none"/>
<path d="M1324.700 382.700L1363.400 418.400" fill="none" stroke-width=".9"/><path d="M1351.400 415.400L1363.400 410.100V418.700Z" stroke="none"/>
<path d="M1368.400 357.400L1407.100 393.100" fill="none" stroke-width=".9"/><path d="M1395.100 390.100L1407.100 384.800V393.400Z" stroke="none"/>
<path d="M1412.100 332.100L1450.800 367.800" fill="none" stroke-width=".9"/><path d="M1438.800 364.800L1450.800 359.500V368.100Z" stroke="none"/>
<path d="M1455.800 306.800L1494.500 342.500" fill="none" stroke-width=".9"/><path d="M1482.500 339.500L1494.500 334.200V342.800Z" stroke="none"/>
<path d="M1499.500 281.500L1538.200 317.200" fill="none" stroke-width=".9"/><path d="M1526.200 314.200L1538.200 308.900V317.500Z" stroke="none"/>
<path d="M1543.200 256.200L1581.900 291.900" fill="none" stroke-width=".9"/><path d="M1569.900 288.900L1581.900 283.600V292.200Z" stroke="none"/>
</g>
<g fill="none" stroke-dasharray="2 1" stroke-width="1.500"><path d="M1199 428L1212 422" stroke="#99006b"/><path d="M1539 233L1550 228" stroke="#99006b"/><path d="M1268 496L1284 488" stroke="#4b0095"/><path d="M1605 302L1620 296" stroke="#4b0095"/></g>

<!-- axes -->
<g stroke-width="2" fill="none"><path d="M592.600 936V905" stroke="#0000e0"/><path d="M592.600 936L618 920" stroke="#e01010"/><path d="M592.600 936L567 920" stroke="#0a9a0a"/></g>
<path d="M592.600 900.500L596 910H589Z" fill="#0000c8"/><path d="M623 918L612 919L616 925Z" fill="#801010"/><path d="M562 918L573 919L569 925Z" fill="#0a7a0a"/>
<g font-family="Liberation Sans" font-size="14" font-weight="bold" text-anchor="middle"><text x="592.600" y="897" fill="#1010e0">Z</text><text x="630.500" y="918" fill="#f01010">X</text><text x="555.500" y="918" fill="#10d010">Y</text></g>
</svg>

<!-- text -->
<div class="t c" style="left:914px;top:5px;color:#fff;line-height:16px;font-size:11.5px;letter-spacing:-.1px">CYPEPLUMBING - Sample.spl</div>
<div class="t" style="left:1570px;top:5px;color:#fff;font-size:11.500px">User BIMserver.center</div>
<div class="t" style="left:1712px;top:5px;color:#fff;font-size:11.500px">Project_001</div>
<div class="t c" style="left:88px;top:28px;line-height:16px">Installation</div>
<div class="t c" style="left:166px;top:28px;line-height:16px">Diagrams</div>
<div class="t c" style="left:257px;top:28px;line-height:16px">Bill of quantities</div>

<div class="t c" style="left:33.5px;top:90px">Catalogues</div>
<div class="t c" style="left:90px;top:90px">General<br>options</div>
<div class="t c" style="left:189px;top:90px">Solar thermal<br>collector</div>
<div class="t c" style="left:302.5px;top:90px">Accumulator<br>tank</div>
<div class="t c" style="left:371.5px;top:90px">Heat<br>exchanger</div>
<div class="t c" style="left:428.5px;top:90px">Fitting</div>
<div class="t c" style="left:469px;top:90px">Pump</div>
<div class="t c" style="left:513px;top:90px">Pipe</div>
<div class="t c" style="left:559.5px;top:90px">Between<br>levels</div>
<div class="t c" style="left:611px;top:90px">Layers</div>
<div class="t c" style="left:651px;top:90px">Edit</div>
<div class="t c" style="left:690px;top:90px">Label</div>
<div class="t c" style="left:745px;top:90px;color:#b5b5b5">Annotations</div>
<div class="t c" style="left:887px;top:90px">Update<br>results</div>
<div class="t c" style="left:930.5px;top:90px">Design</div>
<div class="t c" style="left:1824px;top:90px">Update</div>
<div class="t c" style="left:1865px;top:90px">Share</div>

<div class="t c" style="left:65px;top:145px;color:#333">Project</div>
<div class="t c" style="left:197.500px;top:145px;color:#333">Solar collection</div>
<div class="t c" style="left:326.500px;top:145px;color:#333">Demand</div>
<div class="t c" style="left:490px;top:145px;color:#333;font-size:11.700px">Hydraulic circuit</div>
<div class="t c" style="left:725px;top:145px;color:#333">Edit</div>
<div class="t c" style="left:920px;top:145px;color:#333">Calculation</div>
<div class="t c" style="left:1843px;top:145px;color:#333;font-size:11.300px">BIMserver.center</div>

<div class="t c" style="left:26px;top:162px">Views</div>
<div class="t c" style="left:79px;top:162px">Levels</div>
<div class="t c" style="left:154px;top:162px;font-size:11.700px">Elements read</div>
<div class="t" style="left:536px;top:162px">Work area</div>

<div class="t g" style="left:25px;top:211px;font-size:11.700px">Plan views</div>
<div class="t g" style="left:25px;top:231px;font-size:11.700px">3D views</div>
<div class="t" style="left:44px;top:251px">3D</div>

<div class="t" style="left:3px;top:504px">Layer configuration</div>
<div class="t g" style="left:44px;top:554px;font-size:11.700px">Type of pipe</div>
<div class="t" style="left:44px;top:574px">Auxiliary supply</div>
<div class="t" style="left:44px;top:594px">Auxiliary return</div>
<div class="t" style="left:44px;top:614px">Common</div>
<div class="t g" style="left:44px;top:634px">Own elements</div>
<div class="t" style="left:44px;top:654px">Solar thermal collector</div>
<div class="t" style="left:44px;top:674px">Pumps</div>
<div class="t" style="left:44px;top:694px">Accumulator tanks</div>
<div class="t" style="left:44px;top:714px">Pipes</div>
<div class="t g" style="left:44px;top:734px;font-size:11.700px">General options</div>

<div class="t c" style="left:61.500px;top:1006px;color:#444;font-size:12.700px">Water Systems</div>
<div class="t c" style="left:182px;top:1006px;font-weight:bold;font-size:13.500px;color:#333">Solar Systems</div>
<div class="t c" style="left:309px;top:1006px;color:#444;font-size:12.500px">Sanitary Systems</div>
<div class="t c" style="left:412px;top:1006px;color:#444;font-size:12.500px">Layout</div>
<div class="t" style="left:8px;top:1023px;color:#111">Select a group of elements.</div>
</body></html>
